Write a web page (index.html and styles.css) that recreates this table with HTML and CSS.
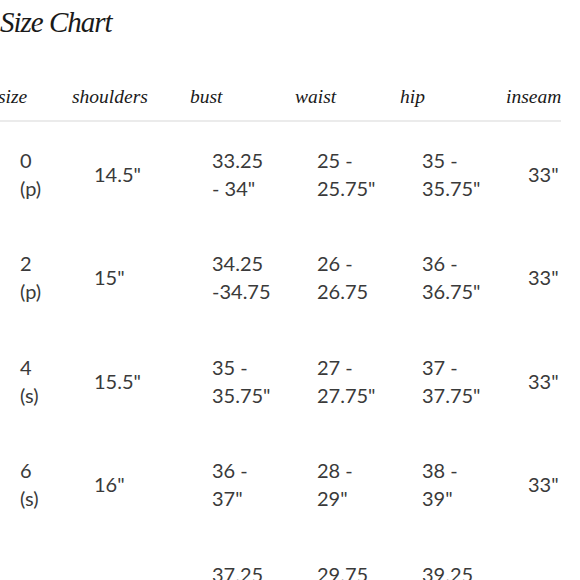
FILE: index.html
```html
<!DOCTYPE html>
<html lang="en">
<head>
<meta charset="utf-8">
<title>Size Chart</title>
<link rel="stylesheet" href="styles.css">
</head>
<body>
<main class="chart">
  <h1 class="chart-title">Size Chart</h1>
  <table class="size-table">
    <colgroup>
      <col class="c-size"><col class="c-shoulders"><col class="c-bust"><col class="c-waist"><col class="c-hip"><col class="c-inseam">
    </colgroup>
    <thead>
      <tr>
        <th>size</th><th>shoulders</th><th>bust</th><th>waist</th><th>hip</th><th>inseam</th>
      </tr>
    </thead>
    <tbody>
      <tr>
        <td>0<br>(p)</td><td>14.5"</td><td>33.25<br>- 34"</td><td>25 -<br>25.75"</td><td>35 -<br>35.75"</td><td>33"</td>
      </tr>
      <tr>
        <td>2<br>(p)</td><td>15"</td><td>34.25<br>-34.75</td><td>26 -<br>26.75</td><td>36 -<br>36.75"</td><td>33"</td>
      </tr>
      <tr>
        <td>4<br>(s)</td><td>15.5"</td><td>35 -<br>35.75"</td><td>27 -<br>27.75"</td><td>37 -<br>37.75"</td><td>33"</td>
      </tr>
      <tr>
        <td>6<br>(s)</td><td>16"</td><td>36 -<br>37"</td><td>28 -<br>29"</td><td>38 -<br>39"</td><td>33"</td>
      </tr>
      <tr>
        <td>8<br>(m)</td><td>16.5"</td><td>37.25<br>-<br>38"</td><td>29.75<br>-<br>30.5"</td><td>39.25<br>-<br>40"</td><td>33"</td>
      </tr>
    </tbody>
  </table>
</main>
</body>
</html>
```

FILE: styles.css
```css
html, body {
  margin: 0;
  padding: 0;
  background: #ffffff;
}

.chart {
  width: 580px;
  overflow: hidden;
}

.chart-title {
  margin: 0;
  padding: 2px 0 0 0;
  font-family: "Liberation Serif", "DejaVu Serif", serif;
  font-style: italic;
  font-weight: normal;
  font-size: 29px;
  line-height: 40px;
  color: #1a1a1a;
  letter-spacing: -1px;
}

.size-table {
  margin-left: -2px;
  border-collapse: collapse;
  table-layout: fixed;
  width: 563px;
}

.c-size { width: 74px; }
.c-shoulders { width: 118px; }
.c-bust { width: 105px; }
.c-waist { width: 105px; }
.c-hip { width: 106px; }
.c-inseam { width: 55px; }

.size-table th {
  padding: 43px 0 11px 0;
  text-align: left;
  font-family: "Liberation Serif", "DejaVu Serif", serif;
  font-style: italic;
  font-weight: normal;
  font-size: 19.5px;
  line-height: 24px;
  color: #1a1a1a;
  white-space: nowrap;
  border-bottom: 2px solid #ebebeb;
}

.size-table td {
  padding: 23.5px 0 24px 22px;
  vertical-align: middle;
  text-align: left;
  font-family: Lato, "Noto Sans", sans-serif;
  font-weight: 400;
  font-size: 20px;
  line-height: 28px;
  color: #3a3a3a;
  white-space: nowrap;
}
```
